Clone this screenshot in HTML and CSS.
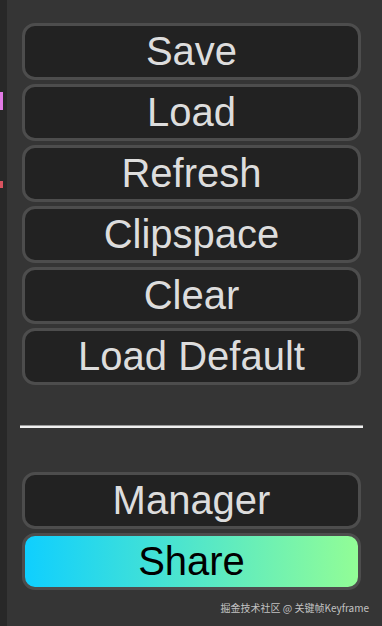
FILE: index.html
```html
<!DOCTYPE html>
<html>
<head>
<meta charset="utf-8">
<link rel="stylesheet" href="styles.css">
</head>
<body>
<div class="page">
  <div class="strip">
    <span class="mark mark-pink"></span>
    <span class="mark mark-red"></span>
  </div>
  <div class="menu">
    <div class="group">
      <button class="btn">Save</button>
      <button class="btn">Load</button>
      <button class="btn">Refresh</button>
      <button class="btn">Clipspace</button>
      <button class="btn">Clear</button>
      <button class="btn">Load Default</button>
    </div>
    <hr class="divider">
    <div class="group">
      <button class="btn">Manager</button>
      <button class="btn btn-share">Share</button>
    </div>
    <div class="watermark">掘金技术社区 @ 关键帧Keyframe</div>
  </div>
</div>
</body>
</html>
```
FILE: styles.css
```css
html, body {
  margin: 0;
  padding: 0;
  height: 100%;
  background: #353535;
}
.page {
  display: flex;
  height: 626px;
  font-family: "Liberation Sans", Arial, sans-serif;
}
.strip {
  width: 7px;
  background: #282828;
  display: flex;
  flex-direction: column;
}
.mark {
  display: block;
  width: 3px;
}
.mark-pink {
  margin-top: 92px;
  height: 18px;
  background: #e27ae6;
}
.mark-red {
  margin-top: 71px;
  height: 7px;
  background: #d9535f;
}
.menu {
  flex: 1;
  display: flex;
  flex-direction: column;
  padding: 23px 21px 0 15px;
}
.group {
  display: flex;
  flex-direction: column;
  gap: 4px;
}
.btn {
  height: 57px;
  box-sizing: border-box;
  border: 3px solid #4d4d4d;
  border-radius: 13px;
  background: #222222;
  color: #dddddd;
  font-family: "Liberation Sans", Arial, sans-serif;
  font-size: 40px;
  line-height: 1;
  padding: 0 0 1px 0;
  display: flex;
  align-items: center;
  justify-content: center;
}
.btn-share {
  background: linear-gradient(to right, #0fcfff, #92fd96);
  color: #000000;
}
.divider {
  margin: 40px -2px 44px -2px;
  height: 2px;
  border: 0;
  border-top: 1px solid #9a9a9a;
  background: #f0f0f0;
}
.watermark {
  margin-top: 10px;
  margin-right: -8px;
  text-align: right;
  font-family: "Noto Sans CJK SC", "Liberation Sans", sans-serif;
  font-size: 10px;
  color: #c2c2c2;
}
```
